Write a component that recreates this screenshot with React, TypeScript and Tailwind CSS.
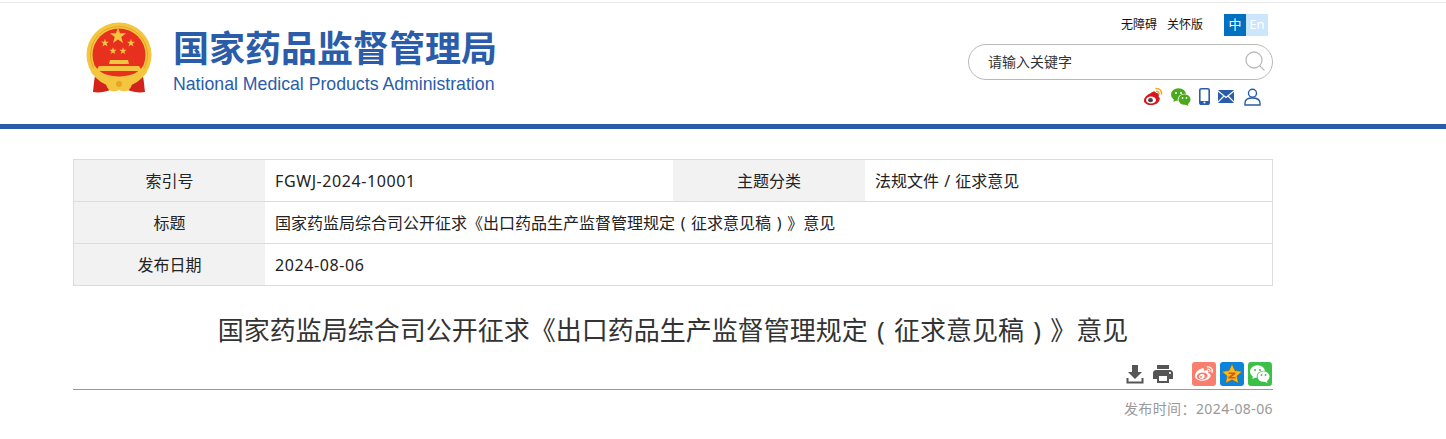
import { MdPrint } from "react-icons/md";
import { FaWeibo } from "react-icons/fa";
import { Search } from "lucide-react";

const font = "font-['Noto_Sans','Noto_Sans_CJK_SC',sans-serif]";

function Emblem() {
	const star = "M0 -10 L2.35 -3.1 L9.5 -3.1 L3.8 1.2 L5.9 8.1 L0 4 L-5.9 8.1 L-3.8 1.2 L-9.5 -3.1 L-2.35 -3.1 Z";
	return (
		<svg className="h-[71px] w-[68px] shrink-0" viewBox="0 0 68 71">
			<path d="M12 46 C9 56 9 62 8 70 C14 71 20 70 25 68 L43 68 C48 70 54 71 60 70 C59 62 59 56 56 46 Z" fill="#d2231c" />
			<circle cx="34" cy="33" fill="#f4c63f" r="32.5" />
			<circle cx="34" cy="33" fill="none" r="28.5" stroke="#e6a524" strokeWidth="1" />
			<circle cx="34" cy="33" fill="#e8301f" r="26.5" />
			<path d="M10 44 C18 58 50 58 58 44 L62 50 C52 65 16 65 6 50 Z" fill="#f4c63f" />
			<g fill="#f5c542">
				<path d={star} transform="translate(33 14) scale(.85)" />
				<path d={star} transform="translate(20 21) scale(.42)" />
				<path d={star} transform="translate(46 21) scale(.42)" />
				<path d={star} transform="translate(28 29) scale(.38)" />
				<path d={star} transform="translate(38 29) scale(.38)" />
				<path d="M25 38 h18 l1 4 h-20 z" />
				<path d="M14 44 h40 l3 5 h-46 z" />
			</g>
			<path d="M21 62 C25 58 30 59 34 61 C38 59 43 58 47 62 C45 71 38 70 34 68 C30 70 23 71 21 62 Z" fill="#f4c63f" />
			<circle cx="34" cy="62" fill="#e6a524" r="3" />
		</svg>
	);
}

function WeiboColor() {
	return (
		<svg className="h-[19px] w-[20px]" viewBox="0 0 20 19">
			<path d="M8 6 C10 4 12.5 4 13 6 C15.5 5.5 16.5 7.5 15.5 9.5 C17.5 10.5 17 14 14.5 16 C11 18.8 4 18.8 1.5 15.5 C-.5 12.5 3 8 8 6 Z" fill="#d8141c" />
			<ellipse cx="8" cy="13" fill="#fff" rx="5" ry="3.6" />
			<ellipse cx="7.5" cy="13.2" fill="#444" rx="2.4" ry="2.1" />
			<path d="M12.5 1.5 C16 1 19 3.5 18.5 7.5 M13 4.3 C15 4 16.3 5.3 16 7" fill="none" stroke="#f2a81d" strokeWidth="1.5" />
		</svg>
	);
}

function WechatBubbles({ bubble, eye, className }: { bubble: string; eye: string; className: string }) {
	return (
		<svg className={className} viewBox="0 0 20 18">
			<ellipse cx="7.5" cy="6.5" fill={bubble} rx="7.5" ry="6.3" />
			<path d="M3 10 L2.5 14 L7 11.5 Z" fill={bubble} />
			<circle cx="5" cy="5" fill={eye} r="1" />
			<circle cx="10" cy="5" fill={eye} r="1" />
			<ellipse cx="13.5" cy="11.5" fill={eye} rx="6.8" ry="5.8" />
			<ellipse cx="13.5" cy="11.5" fill={bubble} rx="6" ry="5.2" />
			<path d="M16.5 15 L17.5 18 L13.5 16.3 Z" fill={bubble} />
			<circle cx="11.5" cy="10" fill={eye} r=".9" />
			<circle cx="15.5" cy="10" fill={eye} r=".9" />
		</svg>
	);
}

function DownloadIcon() {
	return (
		<svg className="h-[20px] w-[20px]" fill="#555" viewBox="0 0 20 20">
			<path d="M7 1 h6 v7 h4 l-7 7 -7 -7 h4 z" />
			<path d="M1.5 14 h2 v3.5 h13 V14 h2 v5.5 h-17 z" />
		</svg>
	);
}

function QzoneIcon() {
	return (
		<svg className="h-[24px] w-[24px]" viewBox="0 0 24 24">
			<rect fill="#0a84dd" height="24" rx="3" width="24" />
			<path d="M12 2 L15 8.6 L22.2 9.4 L17 14 L18.4 21.2 L12 17.8 L5.6 21.2 L7 14 L1.8 9.4 L9 8.6 Z" fill="#f9b81c" stroke="#7a5a10" strokeWidth=".5" />
			<path d="M8.6 10.6 h6.8 v1.3 l-4 3.2 h4.2 v1.3 h-7.2 v-1.3 l4 -3.2 h-3.8 z" fill="#d9541e" />
		</svg>
	);
}

function InfoTable() {
	const label = "flex shrink-0 items-center justify-center bg-[#f2f2f2]";
	const value = "flex items-center px-[10px]";
	return (
		<div className="flex flex-col border border-[#dcdcdc] text-[16px] text-[#222]">
			<div className="flex h-[41px]">
				<div className={`${label} w-[191px]`}>索引号</div>
				<div className={`${value} w-[408px] tracking-[.6px]`}>FGWJ-2024-10001</div>
				<div className={`${label} w-[192px]`}>主题分类</div>
				<div className={`${value} flex-1 [word-spacing:1px]`}>法规文件 / 征求意见</div>
			</div>
			<div className="flex h-[42px] border-t border-[#dcdcdc]">
				<div className={`${label} w-[191px]`}>标题</div>
				<div className={`${value} flex-1 [word-spacing:1.5px]`}>国家药监局综合司公开征求《出口药品生产监督管理规定 ( 征求意见稿 ) 》意见</div>
			</div>
			<div className="flex h-[42px] border-t border-[#dcdcdc]">
				<div className={`${label} w-[191px]`}>发布日期</div>
				<div className={`${value} flex-1 tracking-[.6px]`}>2024-08-06</div>
			</div>
		</div>
	);
}

export default function App() {
	return (
		<div className={`${font} h-[439px] overflow-hidden bg-white pt-[2px]`}>
			<header className="h-[127px] border-t border-t-[#e8e8e8] border-b-[5px] border-b-[#2a5caa]">
				<div className="ml-[73px] flex w-[1200px] justify-between">
					<div className="mt-[19px] flex h-[71px] pl-[12px]">
						<Emblem />
						<div className="ml-[20px] flex flex-col pt-[5px] text-[#2a5caa]">
							<div className="text-[36px] leading-[44px] font-bold">国家药品监督管理局</div>
							<div className="mt-[2px] font-['Liberation_Sans',sans-serif] text-[17.7px] leading-[22px]">
								National Medical Products Administration
							</div>
						</div>
					</div>
					<div className="flex w-[305px] flex-col items-end">
						<div className="mt-[11px] flex items-center pr-[5px] text-[12px] text-[#111]">
							<span>无障碍</span>
							<span className="ml-[10px]">关怀版</span>
							<div className="ml-[21px] flex h-[22px] text-[13px] text-white">
								<span className="flex w-[22px] items-center justify-center bg-[#0070c0]">中</span>
								<span className="flex w-[22px] items-center justify-center bg-[#cce6fd]">En</span>
							</div>
						</div>
						<div className="mt-[8px] flex h-[36px] w-[305px] items-center justify-between rounded-full border border-[#b9b9b9] pr-[5px] pb-[2px] pl-[19px] text-[14px] text-[#333]">
							<span>请输入关键字</span>
							<Search className="h-[24px] w-[24px] text-[#bbb]" strokeWidth={1.3} />
						</div>
						<div className="mt-[7px] flex items-center pr-[12px]">
							<WeiboColor />
							<WechatBubbles bubble="#4ca81c" className="ml-[8px] h-[18px] w-[20px]" eye="#fff" />
							<svg className="ml-[8px] h-[17px] w-[11px]" viewBox="0 0 11 17">
								<rect fill="none" height="15.5" rx="1.5" stroke="#2a5caa" strokeWidth="1.6" width="9.4" x=".8" y=".8" />
								<rect fill="#2a5caa" height="3" width="9" x="1" y="13" />
								<circle cx="5.5" cy="14.5" fill="#fff" r="1" />
							</svg>
							<svg className="ml-[8px] h-[13px] w-[16px]" viewBox="0 0 16 13">
								<rect fill="#2a5caa" height="13" rx="1" width="16" />
								<path d="M0 1 L8 7.5 L16 1 M0 12 L6 6 M16 12 L10 6" fill="none" stroke="#fff" strokeWidth="1.2" />
							</svg>
							<svg className="ml-[10px] h-[18px] w-[17px]" viewBox="0 0 17 18">
								<circle cx="8.5" cy="5.2" fill="none" r="4" stroke="#2a5caa" strokeWidth="1.4" />
								<path d="M1 17 v-2 c0 -3 3 -5 7.5 -5 s7.5 2 7.5 5 v2 z" fill="none" stroke="#2a5caa" strokeWidth="1.4" />
							</svg>
						</div>
					</div>
				</div>
			</header>
			<main className="ml-[73px] w-[1200px] pt-[30px]">
				<InfoTable />
				<h1 className="mt-[25px] h-[38px] text-center text-[26px] leading-[38px] text-[#333] [word-spacing:2.5px]">
					国家药监局综合司公开征求《出口药品生产监督管理规定 ( 征求意见稿 ) 》意见
				</h1>
				<div className="mt-[13px] flex h-[28px] items-center justify-end border-b border-[#999] pr-[1px] pb-[4px]">
					<DownloadIcon />
					<MdPrint className="ml-[6px] h-[24px] w-[24px] text-[#555]" />
					<span className="ml-[17px] flex h-[24px] w-[24px] items-center justify-center rounded-[3px] bg-[#f87e6e]">
						<FaWeibo className="h-[18px] w-[18px] text-white" />
					</span>
					<span className="ml-[4px]"><QzoneIcon /></span>
					<span className="ml-[4px] flex h-[24px] w-[24px] items-center justify-center rounded-[3px] bg-[#3cc04a]">
						<WechatBubbles bubble="#fff" className="h-[18px] w-[20px]" eye="#3cc04a" />
					</span>
				</div>
				<div className="mt-[9px] text-right text-[14px] leading-[20px] tracking-[.4px] text-[#999]">发布时间：2024-08-06</div>
			</main>
		</div>
	);
}
